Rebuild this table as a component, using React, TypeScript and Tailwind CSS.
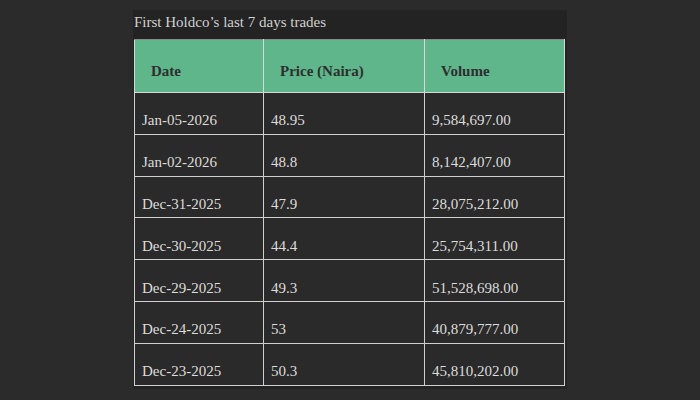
import React from "react";

const rows = [
  ["Jan-05-2026", "48.95", "9,584,697.00"],
  ["Jan-02-2026", "48.8", "8,142,407.00"],
  ["Dec-31-2025", "47.9", "28,075,212.00"],
  ["Dec-30-2025", "44.4", "25,754,311.00"],
  ["Dec-29-2025", "49.3", "51,528,698.00"],
  ["Dec-24-2025", "53", "40,879,777.00"],
  ["Dec-23-2025", "50.3", "45,810,202.00"],
];

export default function App() {
  return (
    <div
      className="w-[700px] h-[400px] bg-[#2b2b2b] flex justify-center overflow-hidden"
      style={{ fontFamily: '"Liberation Serif", "Times New Roman", serif' }}
    >
      <div className="mt-[10px] w-[434px] h-[379px] bg-[#232323] pl-[1px] pr-[4px]">
        <div className="text-[15px] leading-[17px] text-[#d0d0d0] pt-[4px] pb-[8px]">
          First Holdco’s last 7 days trades
        </div>
        <table className="w-[430px] border-collapse border border-[#8a8a8a] table-fixed">
          <colgroup>
            <col className="w-[129px]" />
            <col className="w-[161px]" />
            <col className="w-[140px]" />
          </colgroup>
          <thead>
            <tr className="bg-[#5fb68b] h-[53px]">
              {["Date", "Price (Naira)", "Volume"].map((h) => (
                <th
                  key={h}
                  className="text-left font-bold text-[15px] leading-[17px] text-[#2e2e2e] pl-[16px] pt-[15px] pb-[4px] border border-[#d8d8d8] border-t-[#8a8a8a]"
                >
                  {h}
                </th>
              ))}
            </tr>
          </thead>
          <tbody>
            {rows.map((r) => (
              <tr key={r[0]} className="bg-[#2a2a2a] h-[41.8px]">
                {r.map((c, i) => (
                  <td
                    key={i}
                    className="text-[15px] leading-[17px] text-[#dcdcdc] pl-[7px] pt-[19px] pb-[4px] border border-[#d0d0d0]"
                  >
                    {c}
                  </td>
                ))}
              </tr>
            ))}
          </tbody>
        </table>
      </div>
    </div>
  );
}
